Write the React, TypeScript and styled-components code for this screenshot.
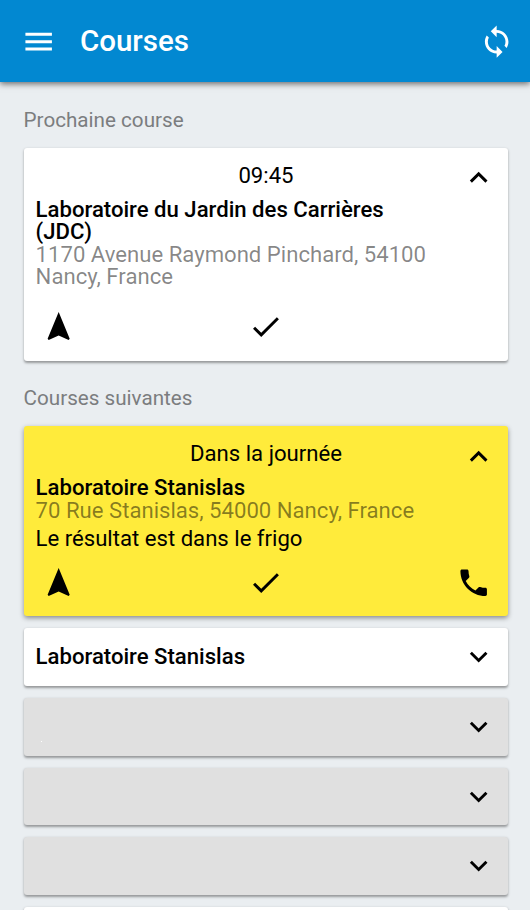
import React from "react";
import styled, { createGlobalStyle } from "styled-components";

const GlobalStyle = createGlobalStyle`
  * { box-sizing: border-box; }
  body {
    margin: 0;
    background: #eaeef1;
    font-family: Roboto, sans-serif;
    color: #000;
  }
`;

const Page = styled.div`
  height: 910px;
  overflow: hidden;
  display: flex;
  flex-direction: column;
  background: #eaeef1;
`;

const AppBar = styled.header`
  height: 82.4px;
  flex: none;
  display: flex;
  align-items: center;
  padding: 0 15.8px 0 20.6px;
  background: #0288d1;
  color: #fff;
  box-shadow: 0 2px 6px rgba(0, 0, 0, 0.55);
`;

const Title = styled.h1`
  flex: 1;
  margin: 0 0 0 24px;
  font-size: 29.5px;
  line-height: 36px;
  font-weight: 500;
`;

const IconButton = styled.button`
  display: flex;
  flex: none;
  padding: 0;
  border: 0;
  background: none;
  color: inherit;
`;

const Svg = styled.svg`
  display: block;
  width: 35.33px;
  height: 35.33px;
  fill: currentColor;
`;

const List = styled.main`
  display: flex;
  flex-direction: column;
  padding: 0 21.6px 0 23.6px;
`;

const SectionTitle = styled.h2`
  margin: 0;
  height: 65.6px;
  padding-top: 25.6px;
  font-size: 20.65px;
  line-height: 24px;
  font-weight: 400;
  color: #7b7d7f;
`;

const tones = { white: "#fff", yellow: "#ffeb3b", grey: "#e0e0e0" };
type Tone = keyof typeof tones;

const Card = styled.article<{ $tone: Tone; $height: number; $raised?: boolean }>`
  flex: none;
  display: flex;
  flex-direction: column;
  height: ${(p) => p.$height}px;
  padding: 0 12px;
  border-radius: 3px;
  background: ${(p) => tones[p.$tone]};
  box-shadow: ${(p) =>
    p.$raised
      ? "0 2px 5px rgba(0, 0, 0, 0.42)"
      : "0 1.5px 2.5px rgba(0, 0, 0, 0.36)"};
`;

const Stack = styled.div`
  display: flex;
  flex-direction: column;
  gap: 12px;
`;

const CardTop = styled.div`
  display: grid;
  grid-template-columns: 35.33px 1fr 35.33px;
  align-items: center;
  height: 50px;
  padding-top: 10.2px;
`;

const Time = styled.div`
  grid-column: 2;
  margin-top: -5.6px;
  text-align: center;
  font-size: 22.13px;
  line-height: 26px;
`;

const Name = styled.div`
  max-width: 400px;
  font-size: 22.13px;
  line-height: 22px;
  font-weight: 500;
`;

const Address = styled.div`
  max-width: 410px;
  margin-top: 0.6px;
  font-size: 22.13px;
  line-height: 22px;
  color: rgba(0, 0, 0, 0.48);
`;

const Note = styled.div`
  margin-top: 6px;
  font-size: 22.13px;
  line-height: 22px;
`;

const Actions = styled.div`
  display: grid;
  grid-template-columns: 1fr 1fr 1fr;
  margin-top: auto;
  padding: 0 5.5px 15.8px;

  > :nth-child(2) { justify-self: center; }
  > :nth-child(3) { justify-self: end; }
`;

const CollapsedRow = styled.div`
  flex: 1;
  display: flex;
  align-items: center;
  justify-content: flex-end;
`;

const CollapsedName = styled(Name)`
  flex: 1;
  max-width: none;
  padding-bottom: 2px;
`;

const Speck = styled.span`
  align-self: flex-end;
  width: 1px;
  height: 1px;
  margin: 0 auto 14px 5px;
  background: #fff;
`;

const paths = {
  menu: "M3 18h18v-2H3v2zm0-5h18v-2H3v2zm0-7v2h18V6H3z",
  sync: "M12 4V1L8 5l4 4V6c3.31 0 6 2.69 6 6 0 1.01-.25 1.97-.7 2.8l1.46 1.46C19.54 15.03 20 13.57 20 12c0-4.42-3.58-8-8-8zm0 14c-3.31 0-6-2.69-6-6 0-1.01.25-1.97.7-2.8L5.24 7.74C4.46 8.97 4 10.43 4 12c0 4.42 3.58 8 8 8v3l4-4-4-4v3z",
  up: "M12 8l-6 6 1.41 1.41L12 10.83l4.59 4.58L18 14z",
  down: "M16.59 8.59L12 13.17 7.41 8.59 6 10l6 6 6-6z",
  navigate: "M12 2L4.5 20.29l.71.71L12 18l6.79 3 .71-.71z",
  check: "M9 16.17L4.83 12l-1.42 1.41L9 19 21 7l-1.41-1.41z",
  phone: "M6.62 10.79c1.44 2.83 3.76 5.14 6.59 6.59l2.2-2.2c.27-.27.67-.36 1.02-.24 1.12.37 2.33.57 3.57.57.55 0 1 .45 1 1V20c0 .55-.45 1-1 1-9.39 0-17-7.61-17-17 0-.55.45-1 1-1h3.5c.55 0 1 .45 1 1 0 1.25.2 2.45.57 3.57.11.35.03.74-.25 1.02l-2.2 2.2z",
};

function Icon({ name, label }: { name: keyof typeof paths; label: string }) {
  return (
    <IconButton aria-label={label}>
      <Svg viewBox="0 0 24 24" aria-hidden="true">
        <path d={paths[name]} />
      </Svg>
    </IconButton>
  );
}

interface ExpandedProps {
  tone: Tone;
  height: number;
  time: string;
  name: string;
  address: string;
  note?: string;
  phone?: boolean;
  raised?: boolean;
}

function ExpandedCard(p: ExpandedProps) {
  return (
    <Card $tone={p.tone} $height={p.height} $raised={p.raised}>
      <CardTop>
        <Time>{p.time}</Time>
        <Icon name="up" label="Réduire" />
      </CardTop>
      <Name>{p.name}</Name>
      <Address>{p.address}</Address>
      {p.note && <Note>{p.note}</Note>}
      <Actions>
        <Icon name="navigate" label="Itinéraire" />
        <Icon name="check" label="Valider" />
        {p.phone && <Icon name="phone" label="Appeler" />}
      </Actions>
    </Card>
  );
}

function CollapsedCard({ tone, name, speck }: { tone: Tone; name?: string; speck?: boolean }) {
  return (
    <Card $tone={tone} $height={57.6}>
      <CollapsedRow>
        {name && <CollapsedName>{name}</CollapsedName>}
        {speck && <Speck />}
        <Icon name="down" label="Développer" />
      </CollapsedRow>
    </Card>
  );
}

export default function App() {
  return (
    <>
      <GlobalStyle />
      <Page>
        <AppBar>
          <Icon name="menu" label="Menu" />
          <Title>Courses</Title>
          <Icon name="sync" label="Actualiser" />
        </AppBar>
        <List>
          <SectionTitle>Prochaine course</SectionTitle>
          <ExpandedCard
            tone="white"
            height={212.6}
            time="09:45"
            name="Laboratoire du Jardin des Carrières (JDC)"
            address="1170 Avenue Raymond Pinchard, 54100 Nancy, France"
          />
          <SectionTitle>Courses suivantes</SectionTitle>
          <Stack>
            <ExpandedCard
              tone="yellow"
              height={190.2}
              time="Dans la journée"
              name="Laboratoire Stanislas"
              address="70 Rue Stanislas, 54000 Nancy, France"
              note="Le résultat est dans le frigo"
              phone
              raised
            />
            <CollapsedCard tone="white" name="Laboratoire Stanislas" />
            <CollapsedCard tone="grey" speck />
            <CollapsedCard tone="grey" />
            <CollapsedCard tone="grey" />
            <CollapsedCard tone="white" />
          </Stack>
        </List>
      </Page>
    </>
  );
}
